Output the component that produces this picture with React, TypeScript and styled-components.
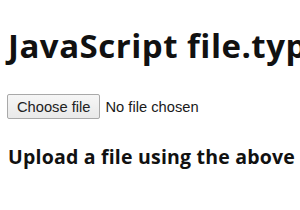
import React from "react";
import styled, { createGlobalStyle } from "styled-components";

const Global = createGlobalStyle`
  html, body {
    margin: 0;
    background: #fff;
    overflow: hidden;
  }
  body {
    padding: 8px;
    font-family: "Liberation Sans", Arial, sans-serif;
    color: #000;
  }
`;

const s = {
  Page: styled.div`
    display: flex;
    flex-direction: column;
    white-space: nowrap;
  `,
  Title: styled.h1`
    margin: 16px 0 0 0;
    font-family: "Open Sans", "Noto Sans", sans-serif;
    font-weight: 700;
    font-size: 33px;
    letter-spacing: 0.5px;
    line-height: 44px;
    color: #111;
  `,
  Picker: styled.label`
    display: flex;
    align-items: center;
    gap: 5px;
    margin-top: 26px;
    cursor: pointer;
    font-family: "Liberation Sans", Arial, sans-serif;
    font-size: 14.7px;
    color: #1a1a1a;

    input {
      display: none;
    }
  `,
  PickButton: styled.span`
    display: flex;
    align-items: center;
    height: 23px;
    padding: 0 9px 0 9px;
    margin-left: -1px;
    border: 1px solid #a9a9a9;
    border-radius: 2px;
    background: linear-gradient(#f6f6f6, #e9e9e9);
    color: #222;
  `,
  Hint: styled.h3`
    margin: 25px 0 0 0;
    font-family: "Open Sans", "Noto Sans", sans-serif;
    font-weight: 700;
    font-size: 19.5px;
    letter-spacing: 0.2px;
    line-height: 26px;
    color: #111;
  `,
};

export default function App() {
  return (
    <>
      <Global />
      <s.Page>
        <s.Title>JavaScript file.type property</s.Title>
        <s.Picker>
          <input type="file" />
          <s.PickButton>Choose file</s.PickButton>
          <span>No file chosen</span>
        </s.Picker>
        <s.Hint>Upload a file using the above input</s.Hint>
      </s.Page>
    </>
  );
}
